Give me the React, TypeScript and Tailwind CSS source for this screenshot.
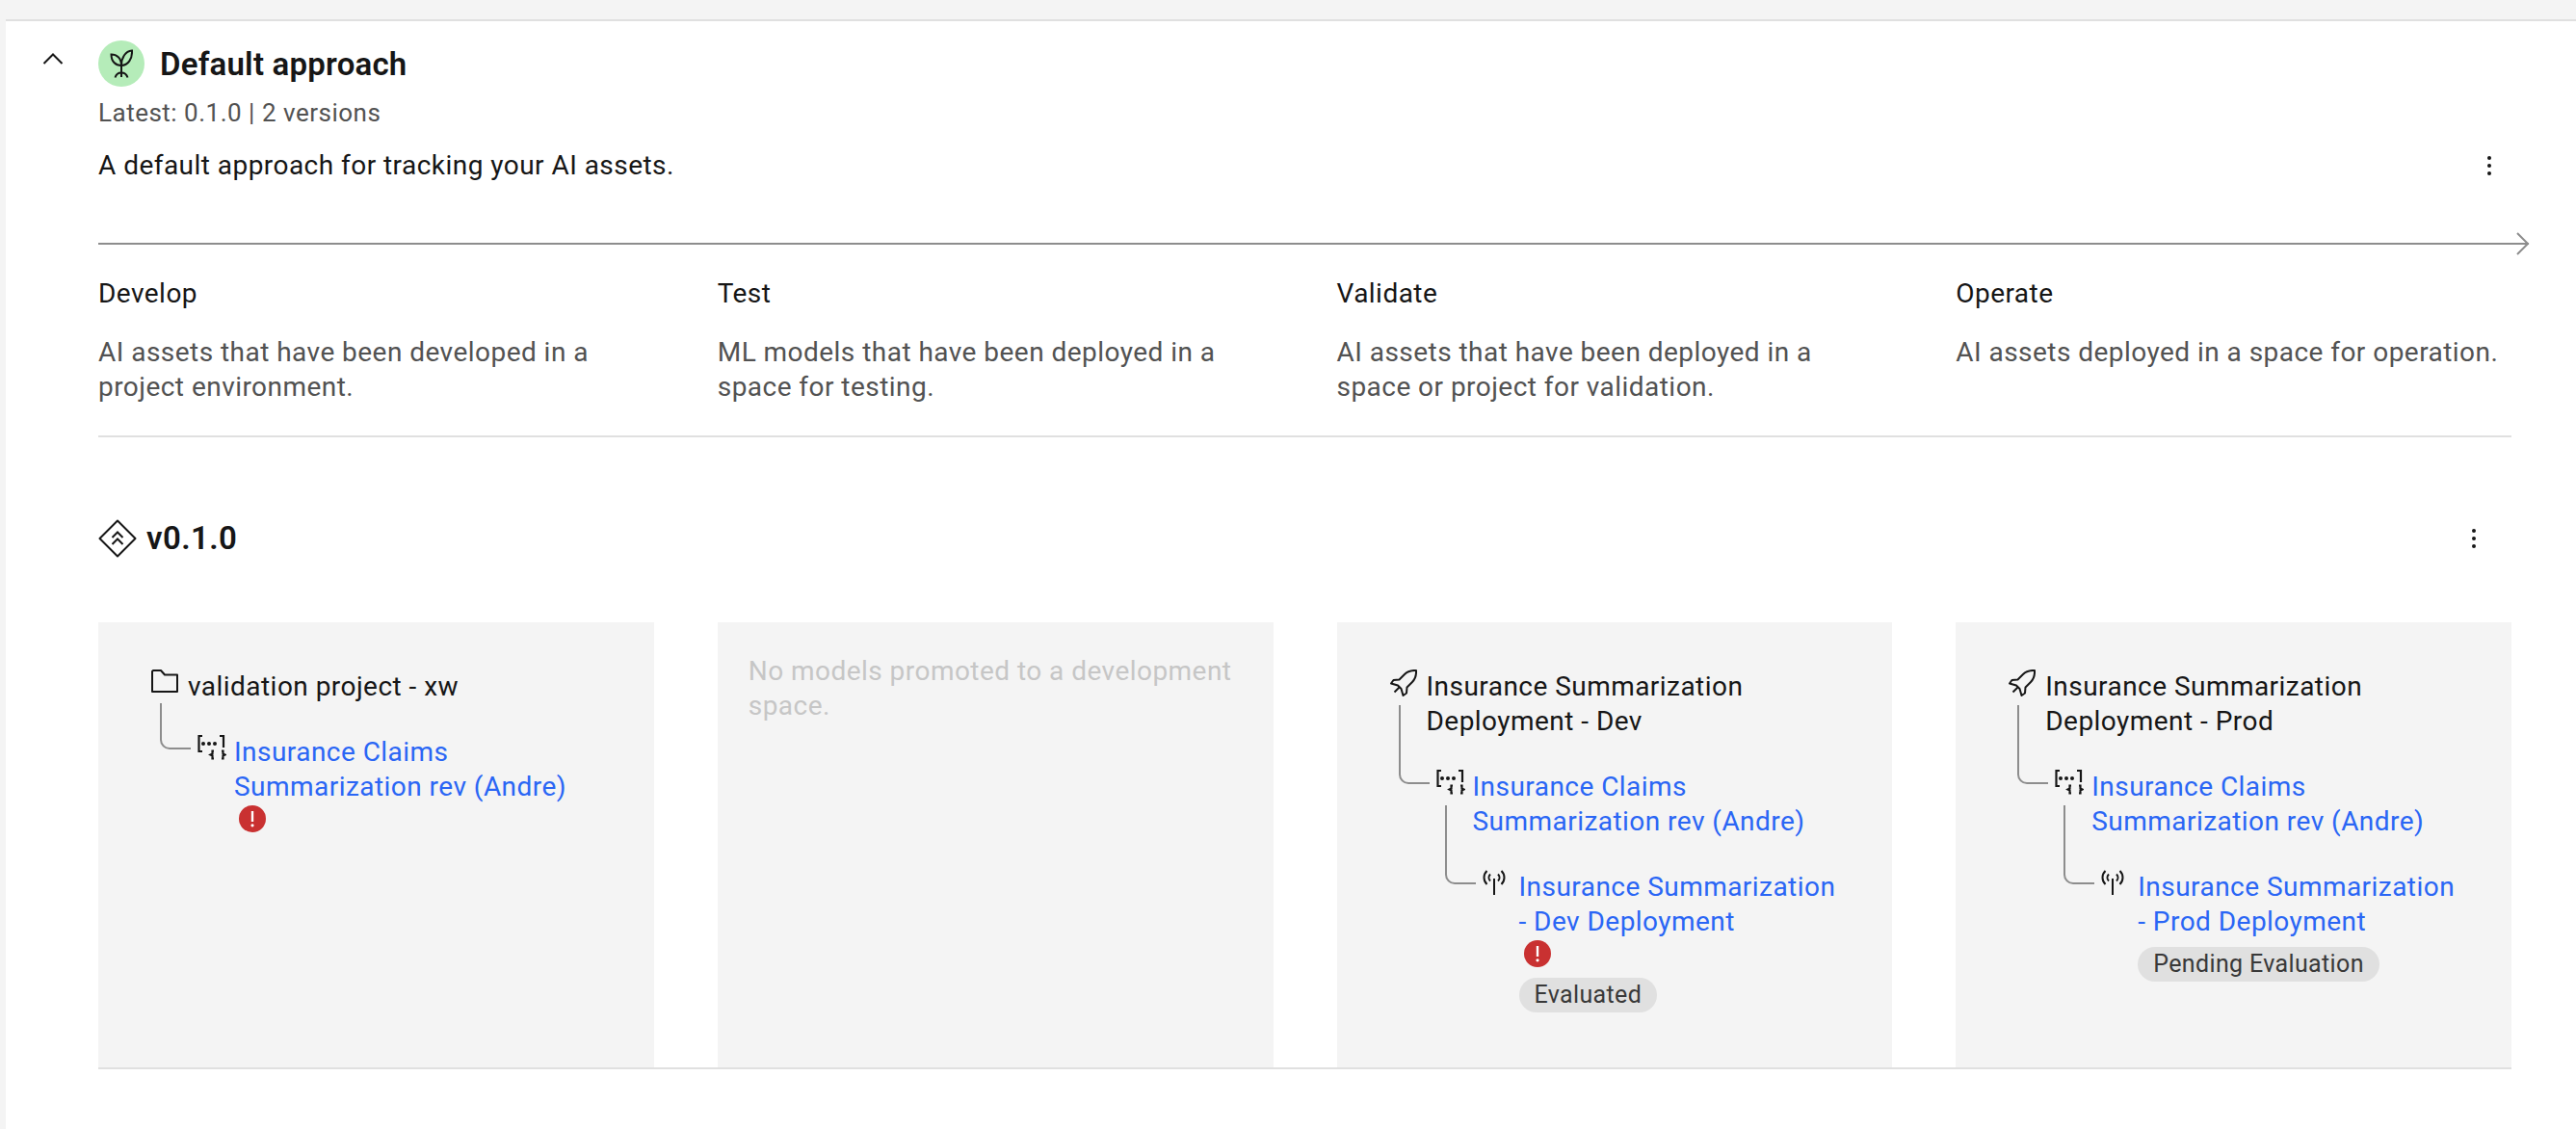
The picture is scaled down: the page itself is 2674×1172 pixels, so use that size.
import { ReactNode } from 'react';

const stages = [
  { name: 'Develop', text: 'AI assets that have been developed in a project environment.' },
  { name: 'Test', text: 'ML models that have been deployed in a space for testing.' },
  { name: 'Validate', text: 'AI assets that have been deployed in a space or project for validation.' },
  { name: 'Operate', text: 'AI assets deployed in a space for operation.' },
];

const Kebab = () => (
  <svg width="24" height="24" viewBox="0 0 24 24" fill="#161616">
    <circle cx="12" cy="4" r="2" />
    <circle cx="12" cy="12" r="2" />
    <circle cx="12" cy="20" r="2" />
  </svg>
);

const Sprout = () => (
  <svg width="24" height="30" viewBox="0 0 24 30" fill="none" stroke="#161616" strokeWidth="2">
    <path d="M12 17V29" />
    <path d="M12 17C6 17 1.5 13 1.5 5.5C7 5.5 12 9 12 17Z" />
    <path d="M12 17C12 9 16 2 23 1.5C23.5 10 19 17 12 17Z" />
    <path d="M5.5 29.5C6.5 26 9 24.5 12 24.5C15 24.5 17.5 26 18.5 29.5" />
  </svg>
);

const VersionIcon = () => (
  <svg width="40" height="40" viewBox="0 0 40 40" fill="none" stroke="#161616" strokeWidth="2">
    <path d="M20 1.5L38.5 20L20 38.5L1.5 20Z" strokeLinejoin="round" />
    <path d="M14.5 19L20 13.5L25.5 19" />
    <path d="M14.5 26L20 20.5L25.5 26" />
  </svg>
);

const FolderIcon = () => (
  <svg width="28" height="24" viewBox="0 0 28 24" fill="none" stroke="#161616" strokeWidth="2" strokeLinejoin="round">
    <path d="M2 1H10L14 5.5H27V23H1V2Z" />
  </svg>
);

const RocketIcon = () => (
  <svg width="28" height="28" viewBox="0 0 28 28" fill="none" stroke="#161616" strokeWidth="2" strokeLinejoin="round">
    <path d="M27 1C22 .7 18 2 15 5L9.5 10.5L3.5 11L1 14.5L8 16.5L11.5 20L13.5 27L17 24.5L17.5 18.5L23 13C26 10 27.3 6 27 1Z" />
    <path d="M9.5 18.5L4.5 23.5" />
  </svg>
);

const DataIcon = () => (
  <svg width="30" height="27" viewBox="0 0 30 27" fill="none" stroke="#161616" strokeWidth="2.2">
    <path d="M5 1H1.5V17H5" />
    <path d="M23 1H27V13" />
    <circle cx="6" cy="9" r="2" fill="#161616" stroke="none" />
    <circle cx="12" cy="9" r="2" fill="#161616" stroke="none" />
    <circle cx="18" cy="9" r="2" fill="#161616" stroke="none" />
    <path d="M17 16.5H15.5V19.5L13.5 20.5L15.5 21.5V24.5H17" />
    <path d="M25 16.5H26.5V19.5L28.5 20.5L26.5 21.5V24.5H25" />
  </svg>
);

const AntennaIcon = () => (
  <svg width="24" height="26" viewBox="0 0 24 26" fill="none" stroke="#161616" strokeWidth="2">
    <path d="M12 9V26" />
    <path d="M4.5 1C.5 5 .5 11 4.5 15" />
    <path d="M19.5 1C23.5 5 23.5 11 19.5 15" />
    <path d="M8 4.5C6 6.5 6 9.5 8 11.5" />
    <path d="M16 4.5C18 6.5 18 9.5 16 11.5" />
  </svg>
);

const ErrorIcon = () => (
  <svg width="28" height="28" viewBox="0 0 28 28" className="mt-px ml-[5px] block">
    <circle cx="14" cy="14" r="14" fill="#c93131" />
    <rect x="12.8" y="6" width="2.4" height="11" fill="#fff" />
    <circle cx="14" cy="20.8" r="1.6" fill="#fff" />
  </svg>
);

const Tag = ({ children }: { children: ReactNode }) => (
  <span className="inline-block h-9 rounded-full bg-[#e0e0e0] px-4 text-[25px] leading-9 tracking-[0.36px] text-[#393939]">
    {children}
  </span>
);

// line from the parent icon down to this row; tall when the parent label wraps
const Connector = ({ tall }: { tall?: boolean }) => (
  <div
    className={
      tall
        ? 'absolute left-[-39px] top-[-67px] h-[82px] w-[32px] rounded-bl-[10px] border-b-2 border-l-2 border-[#8d8d8d]'
        : 'absolute left-[-39px] top-[-33px] h-[48px] w-[32px] rounded-bl-[10px] border-b-2 border-l-2 border-[#8d8d8d]'
    }
  />
);

type NodeProps = {
  icon: ReactNode;
  label: string;
  link?: boolean;
  connector?: 'short' | 'tall';
  after?: ReactNode;
  children?: ReactNode;
};

const TreeNode = ({ icon, label, link, connector, after, children }: NodeProps) => (
  <div>
    <div className="relative flex">
      {connector && <Connector tall={connector === 'tall'} />}
      <div className="w-[38px] shrink-0">{icon}</div>
      <div className="min-w-0 flex-1">
        <div className={link ? 'text-[#2a66f5]' : 'text-[#161616]'}>{label}</div>
        {after}
      </div>
    </div>
    {children && <div className="mt-8 ml-[48px]">{children}</div>}
  </div>
);

const Card = ({ children }: { children: ReactNode }) => (
  <div className="h-[462px] bg-[#f4f4f4] pt-[49px] pr-12 pl-[55px]">{children}</div>
);

export default function App() {
  return (
    <div className="min-h-screen bg-[#f4f4f4] pt-5 pl-[6px] font-['Roboto',sans-serif] text-[28px] leading-9 tracking-[0.46px] text-[#161616]">
      <div className="flex min-h-[1152px] border-t-2 border-[#e0e0e0] bg-white">
        {/* Chevron column */}
        <div className="w-[96px] shrink-0 pt-[33px] pl-[38px]">
          <svg width="22" height="12" viewBox="0 0 22 12" fill="none" stroke="#161616" strokeWidth="2">
            <path d="M1.5 11L11 1.5L20.5 11" />
          </svg>
        </div>

        <div className="min-w-0 flex-1 pt-5 pr-[67px]">
          {/* Header */}
          <div className="flex h-12 items-center gap-4">
            <div className="flex size-12 items-center justify-center rounded-full bg-[#b5ecb9]">
              <Sprout />
            </div>
            <h1 className="pt-[2px] text-[33px] font-semibold tracking-[0.2px] text-[#161616]">Default approach</h1>
          </div>
          <p className="mt-[14px] text-[26px] leading-[27px] tracking-[0.5px] text-[#525252]">Latest: 0.1.0 | 2 versions</p>
          <div className="mt-[23px] flex items-center justify-between pr-[11px]">
            <p>A default approach for tracking your AI assets.</p>
            <Kebab />
          </div>

          {/* Stage arrow */}
          <div className="relative mt-[62px] mr-[-18px] h-[2px] bg-[#8d8d8d]">
            <svg
              width="14"
              height="24"
              viewBox="0 0 14 24"
              fill="none"
              stroke="#8d8d8d"
              strokeWidth="2"
              className="absolute top-[-11px] right-[-1px]"
            >
              <path d="M1 1L12 12L1 23" />
            </svg>
          </div>

          {/* Stages */}
          <div className="mt-[33px] grid grid-cols-4 gap-[66px] border-b-2 border-[#e0e0e0] pb-[32px]">
            {stages.map((stage) => (
              <div key={stage.name}>
                <h3>{stage.name}</h3>
                <p className="mt-[25px] text-[#525252]">{stage.text}</p>
              </div>
            ))}
          </div>

          {/* Version */}
          <div className="mt-[85px] flex h-10 items-center justify-between pr-[27px]">
            <div className="flex items-center gap-[10px]">
              <VersionIcon />
              <h2 className="text-[33px] font-semibold tracking-[0.4px] text-[#161616]">v0.1.0</h2>
            </div>
            <Kebab />
          </div>

          <div className="mt-[67px] grid grid-cols-4 gap-[66px] border-b-2 border-[#e0e0e0]">
            <Card>
              <TreeNode icon={<FolderIcon />} label="validation project - xw">
                <TreeNode
                  icon={<DataIcon />}
                  label="Insurance Claims Summarization rev (Andre)"
                  link
                  connector="short"
                  after={<ErrorIcon />}
                />
              </TreeNode>
            </Card>

            <div className="h-[462px] bg-[#f4f4f4] px-8 pt-[33px] text-[#c6c6c6]">
              No models promoted to a development space.
            </div>

            <Card>
              <TreeNode icon={<RocketIcon />} label="Insurance Summarization Deployment - Dev">
                <TreeNode icon={<DataIcon />} label="Insurance Claims Summarization rev (Andre)" link connector="tall">
                  <TreeNode
                    icon={<AntennaIcon />}
                    label="Insurance Summarization - Dev Deployment"
                    link
                    connector="tall"
                    after={
                      <>
                        <ErrorIcon />
                        <div className="mt-[10px]">
                          <Tag>Evaluated</Tag>
                        </div>
                      </>
                    }
                  />
                </TreeNode>
              </TreeNode>
            </Card>

            <Card>
              <TreeNode icon={<RocketIcon />} label="Insurance Summarization Deployment - Prod">
                <TreeNode icon={<DataIcon />} label="Insurance Claims Summarization rev (Andre)" link connector="tall">
                  <TreeNode
                    icon={<AntennaIcon />}
                    label="Insurance Summarization - Prod Deployment"
                    link
                    connector="tall"
                    after={
                      <div className="mt-[7px]">
                        <Tag>Pending Evaluation</Tag>
                      </div>
                    }
                  />
                </TreeNode>
              </TreeNode>
            </Card>
          </div>
        </div>
      </div>
    </div>
  );
}
